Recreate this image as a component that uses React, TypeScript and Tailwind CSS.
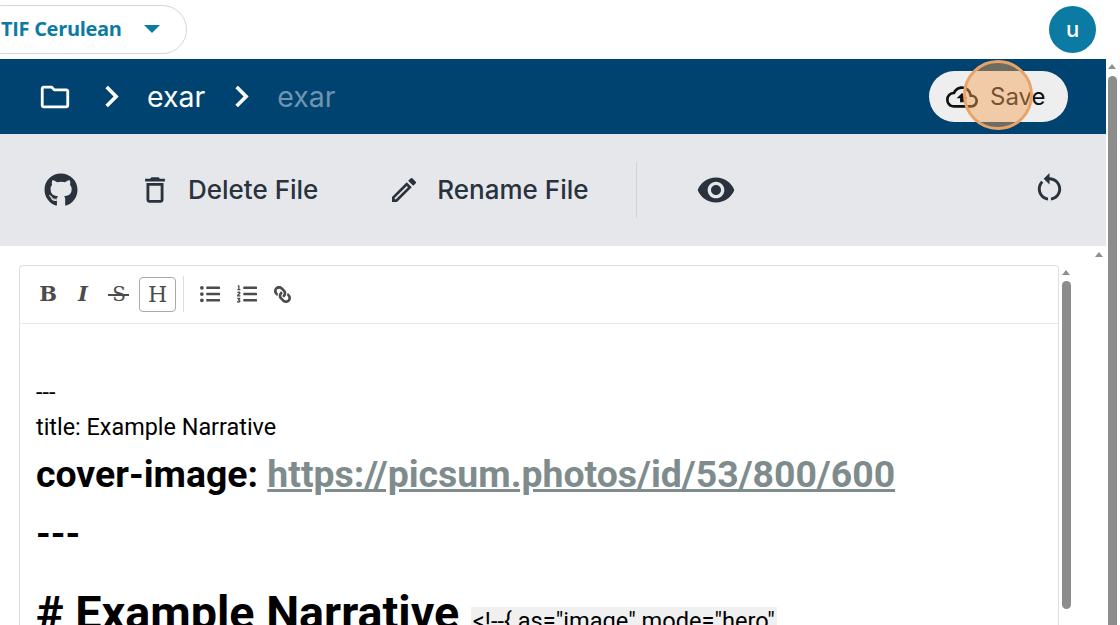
import { FaGithub, FaLink, FaListOl, FaListUl } from "react-icons/fa";
import {
  MdChevronRight,
  MdOutlineCloudUpload,
  MdOutlineDelete,
  MdOutlineEdit,
  MdOutlineFolder,
  MdRemoveRedEye,
  MdRestartAlt,
} from "react-icons/md";

function ScrollArrow({ className }: { className: string }) {
  return (
    <div
      className={`absolute h-0 w-0 border-x-[4px] border-b-[5px] border-x-transparent border-b-[#8f8f8f] ${className}`}
    />
  );
}

export default function App() {
  return (
    <div className="relative h-[625px] w-[1120px] overflow-hidden bg-white font-['Inter',sans-serif]">
      {/* Top header */}
      <header className="flex h-[59px] items-center justify-between pb-[1px] pr-[24px]">
        <button className="-ml-6 flex h-[49px] w-[211px] items-center rounded-full border border-[#d4d4d4] pl-6">
          <span className="font-['Open_Sans',sans-serif] text-[20px] font-bold tracking-[-0.3px] text-[#0b7ba3]">
            TIF Cerulean
          </span>
          <span className="ml-[22px] h-0 w-0 border-x-[8px] border-t-[8px] border-x-transparent border-t-[#0b7ba3]" />
        </button>
        <div className="flex h-[47px] w-[47px] items-center justify-center rounded-full bg-[#0b7ba3] text-[22px] font-medium text-white">
          u
        </div>
      </header>

      <div className="flex">
        <div className="w-[1106px]">
          {/* Breadcrumb bar */}
          <div className="flex h-[75px] items-center bg-[#004370] pl-[38px] pr-[38px] text-white">
            <MdOutlineFolder className="text-[34px]" />
            <MdChevronRight className="ml-[18px] text-[43px]" />
            <span className="ml-[14px] mt-[1px] text-[28.5px]">exar</span>
            <MdChevronRight className="ml-[15px] text-[43px]" />
            <span className="ml-[14px] mt-[1px] text-[28.5px] text-[#6f94ae]">exar</span>
            <button className="ml-auto flex h-[51px] w-[139px] items-center rounded-full bg-[#eeeeee] pl-[17px] text-[24px] text-[#111111]">
              <MdOutlineCloudUpload className="text-[32px]" />
              <span className="ml-[12px]">Save</span>
            </button>
          </div>

          {/* File actions */}
          <div className="flex h-[112px] items-center bg-[#e5e7eb] pl-[44px] pr-[39px] text-[#29323d]">
            <FaGithub className="text-[34px]" />
            <MdOutlineDelete className="ml-[60px] text-[34px]" />
            <span className="-mt-[2px] ml-[16px] text-[26px] font-medium">Delete File</span>
            <MdOutlineEdit className="ml-[70px] text-[32px]" />
            <span className="-mt-[2px] ml-[17px] text-[26px] font-medium">Rename File</span>
            <div className="ml-[47px] h-[56px] w-px bg-[#cfd2d8]" />
            <MdRemoveRedEye className="ml-[59px] text-[40px]" />
            <MdRestartAlt className="ml-auto -mt-[6px] text-[35px]" />
          </div>

          {/* Editor */}
          <div className="flex pl-[19px] pt-[19px]">
            <div className="h-[400px] w-[1040px] rounded-t border border-b-0 border-[#dddfe3]">
              <div className="flex h-[58px] items-center border-b border-[#e5e7eb] pb-[1px] pl-[10px] text-[#4b4b4b]">
                <span className="flex h-8 w-[36px] items-center justify-center font-['DejaVu_Serif',serif] text-[21px] font-bold">
                  B
                </span>
                <span className="flex h-8 w-[34px] items-center justify-center font-['DejaVu_Serif',serif] text-[21px] font-bold italic">
                  I
                </span>
                <span className="relative flex h-8 w-[38px] items-center justify-center font-['DejaVu_Serif',serif] text-[20px]">
                  S
                  <span className="absolute left-[8px] top-[16px] h-[1.5px] w-[21px] bg-[#4b4b4b]" />
                </span>
                <span className="ml-[1px] flex h-[35px] w-[37px] items-center justify-center rounded border border-[#aaaaaa] font-['DejaVu_Serif',serif] text-[22px]">
                  H
                </span>
                <div className="ml-[7px] mr-[16px] h-[36px] w-px bg-[#dddddd]" />
                <FaListUl className="text-[20px]" />
                <FaListOl className="ml-[17px] text-[20px]" />
                <FaLink className="ml-[17px] -scale-x-100 text-[17px]" />
              </div>
              <div className="pl-4 pt-[51px] font-['Roboto',sans-serif] text-black">
                <p className="text-[23.4px] leading-[35px]">---</p>
                <p className="text-[23.4px] leading-[35px]">title: Example Narrative</p>
                <p className="mt-[2px] whitespace-nowrap text-[37.4px] font-bold leading-[54px]">
                  cover-image:{" "}
                  <a className="text-[#7f8c8d] underline">https://picsum.photos/id/53/800/600</a>
                </p>
                <p className="mt-[5px] text-[37.4px] font-bold leading-[54px]">---</p>
                <p className="mt-[23px] whitespace-nowrap text-[46.7px] font-bold leading-[60px]">
                  # Example Narrative{" "}
                  <span className="bg-[#f0f0f0] px-0.5 align-baseline text-[23.6px] font-normal">
                    &lt;!--{"{"} as="image" mode="hero"
                  </span>
                </p>
              </div>
            </div>
            {/* Inner scrollbar */}
            <div className="relative ml-[2px] w-[16px]">
              <div className="ml-[1px] mt-[16px] h-[328px] w-[9px] rounded-full bg-[#8c8c8c]" />
            </div>
          </div>
        </div>

        {/* Page scrollbar */}
        <div className="flex-1 pl-[2px] pt-[17px]">
          <div className="h-[600px] w-[9px] rounded-full bg-[#8c8c8c]" />
        </div>
      </div>

      <ScrollArrow className="left-[1108px] top-[64px]" />
      <ScrollArrow className="left-[1095px] top-[252px]" />
      <ScrollArrow className="left-[1062px] top-[270px]" />

      {/* Click highlight */}
      <div className="absolute left-[963px] top-[60px] h-[70px] w-[70px] rounded-full border-[3px] border-[#e8a468] bg-[#f5a050]/45" />
    </div>
  );
}
